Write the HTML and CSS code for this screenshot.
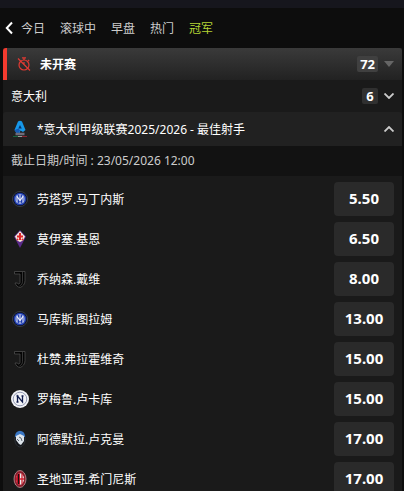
FILE: index.html
```html
<!DOCTYPE html>
<html lang="zh-CN">
<head>
<meta charset="UTF-8">
<meta name="viewport" content="width=device-width, initial-scale=1">
<title>冠军</title>
<link rel="stylesheet" href="styles.css">
</head>
<body>
<svg class="sprite" aria-hidden="true">
  <symbol id="inter" viewBox="0 0 18 18">
    <circle cx="9" cy="9" r="7.600" fill="#10131c" stroke="#3c414c" stroke-width=".8"/>
    <circle cx="9" cy="9" r="6.300" fill="#1d3bb0"/>
    <circle cx="9" cy="9" r="4.600" fill="none" stroke="#8fa0dc" stroke-width=".7"/>
    <path d="M6 5.500v7M9 4.500v9M12 5.500v7M6 6l3 5 3-5" fill="none" stroke="#e6ebfa" stroke-width="1.100"/>
  </symbol>
  <symbol id="fiorentina" viewBox="0 0 18 18">
    <path d="M9 0l6 6.500L9 18 3 6.500z" fill="#5a2a8a"/>
    <path d="M9 1l5 5.500-2 4L9 12l-3-1.500-2-4z" fill="#f3e9dc"/>
    <path d="M9 3v7M6 6.500h6M7 9l-1 1M11 9l1 1" stroke="#e0252b" stroke-width="2"/>
  </symbol>
  <symbol id="juve" viewBox="0 0 18 18">
    <path d="M3.500 1.500h10.500v9c0 3.500-2 6-5 7-2.500-.5-4-2-5-4.500h2.500c.7 1.600 2 1.500 2.500-.5V4H3.500z" fill="#050505" stroke="#4c4c4c" stroke-width=".8"/>
    <path d="M11.500 2v9.500c0 2-1 3.500-3 4.500" fill="none" stroke="#4c4c4c" stroke-width=".7"/>
  </symbol>
  <symbol id="napoli" viewBox="0 0 18 18">
    <circle cx="9" cy="9" r="9" fill="#f2f3f7"/>
    <circle cx="9" cy="9" r="6.800" fill="none" stroke="#7a82a0" stroke-width=".8"/>
    <path d="M5.500 6h2M10.500 6h2M5.500 12h2M6.500 12V6l5 6V6" fill="none" stroke="#111d4d" stroke-width="1.300"/>
  </symbol>
  <symbol id="atalanta" viewBox="0 0 18 18">
    <ellipse cx="9" cy="9" rx="5.200" ry="8" fill="#15171b" stroke="#3b4048" stroke-width=".6"/>
    <path d="M4 7c0-4 2-6 5-6s5 2 5 6z" fill="#3976c4"/>
    <path d="M5 6l4-2 4 2v5l-3 4-2-1-3-4z" fill="#dce3ea"/>
    <path d="M8 7l2 1 1 3M6 9l2 2" fill="none" stroke="#5d6670"/>
  </symbol>
  <symbol id="milan" viewBox="0 0 18 18">
    <ellipse cx="9" cy="9" rx="6" ry="8.500" fill="#8c1f2d" stroke="#c9a5a8" stroke-width=".7"/>
    <ellipse cx="9" cy="9" rx="4" ry="5.800" fill="#eee"/>
    <path d="M9 3.200c-3 0-4 3-4 5.800s1 5.800 4 5.800z" fill="#c9162b"/>
    <path d="M7.500 4v10" stroke="#111" stroke-width="1.200"/>
    <path d="M9 9h4" stroke="#d3202f" stroke-width="1.500"/>
    <path d="M11 4v10" stroke="#d3202f" stroke-width="1.300"/>
  </symbol>
</svg>

<div class="top-strip"></div>
<nav class="tabs">
  <button class="back" type="button" aria-label="返回">
    <svg width="8" height="14" viewBox="0 0 8 14"><path d="M7 1.500L1.800 7 7 12.500" fill="none" stroke="#fff" stroke-width="2"/></svg>
  </button>
  <a href="#">今日</a>
  <a href="#">滚球中</a>
  <a href="#">早盘</a>
  <a href="#">热门</a>
  <a href="#" class="active">冠军</a>
</nav>

<main class="panel">
  <div class="status">
    <svg class="timer" width="14" height="14" viewBox="0 0 14 14">
      <g fill="none" stroke="#e03a33" stroke-width="1.200">
        <circle cx="7" cy="8" r="5"/>
        <path d="M5 .8h4M7 1v2M1 1.500l12 12M11 3l1.200 1.200M7 5v3"/>
      </g>
    </svg>
    <h1>未开赛</h1>
    <span class="count">72</span>
    <svg class="arrow" width="10" height="6" viewBox="0 0 10 6"><path d="M0 0h10L5 6z" fill="#666"/></svg>
  </div>

  <div class="country">
    <span class="name">意大利</span>
    <span class="count">6</span>
    <svg class="arrow" width="10" height="6" viewBox="0 0 10 6"><path d="M.5.5L5 5 9.500.5" fill="none" stroke="#ccc" stroke-width="1.800"/></svg>
  </div>

  <div class="league">
    <svg class="logo" width="18" height="18" viewBox="0 0 18 18">
      <path d="M7 1.500Q9 0 11 1.500L14.500 10 12 12 9.500 10.500 8.500 13H5.500L3.500 10z" fill="#1698ea"/>
      <path d="M9 5l1.800 3.500H7.300z" fill="#0b3268"/>
      <path d="M3.500 10l4-1.500 1.500 2-1 2.500H5.500z" fill="#1559b5"/>
      <path d="M4.500 14h9" stroke="#6d6c7c" stroke-width="2.500"/>
      <path d="M2 16.500h5" stroke="#17643e"/><path d="M7 16.500h4" stroke="#999"/><path d="M11 16.500h5" stroke="#8c2631"/>
    </svg>
    <span class="name">*意大利甲级联赛2025/2026 - 最佳射手</span>
    <svg class="arrow" width="10" height="6" viewBox="0 0 10 6"><path d="M.5 5.500L5 1l4.500 4.500" fill="none" stroke="#ccc" stroke-width="1.800"/></svg>
  </div>

  <div class="deadline">截止日期/时间 : 23/05/2026 12:00</div>

  <ul class="players">
    <li><svg class="logo"><use href="#inter"/></svg><span class="name">劳塔罗.马丁内斯</span><button class="odds" type="button">5.50</button></li>
    <li><svg class="logo"><use href="#fiorentina"/></svg><span class="name">莫伊塞.基恩</span><button class="odds" type="button">6.50</button></li>
    <li><svg class="logo"><use href="#juve"/></svg><span class="name">乔纳森.戴维</span><button class="odds" type="button">8.00</button></li>
    <li><svg class="logo"><use href="#inter"/></svg><span class="name">马库斯.图拉姆</span><button class="odds" type="button">13.00</button></li>
    <li><svg class="logo"><use href="#juve"/></svg><span class="name">杜赞.弗拉霍维奇</span><button class="odds" type="button">15.00</button></li>
    <li><svg class="logo"><use href="#napoli"/></svg><span class="name">罗梅鲁.卢卡库</span><button class="odds" type="button">15.00</button></li>
    <li><svg class="logo"><use href="#atalanta"/></svg><span class="name">阿德默拉.卢克曼</span><button class="odds" type="button">17.00</button></li>
    <li><svg class="logo"><use href="#milan"/></svg><span class="name">圣地亚哥.希门尼斯</span><button class="odds" type="button">17.00</button></li>
  </ul>
</main>
</body>
</html>
```

FILE: styles.css
```css
* {
  margin: 0; padding: 0; box-sizing: border-box;
}
html {
  scrollbar-width: none;
}
body {
  background: #0d0d0d;
  color: #fff;
  font-family: "Noto Sans", "Noto Sans CJK SC", sans-serif;
  font-size: 12px;
  line-height: 18px;
}
button {
  border: none;
  font-family: inherit;
  color: #fff;
  cursor: pointer;
}
.sprite {
  position: absolute;
  width: 0; height: 0;
}
.top-strip {
  height: 8px;
  background: #16161d;
}
/* tabs */
.tabs {
  display: flex;
  align-items: center;
  gap: 15px;
  height: 40px;
  padding-left: 5px;
}
.back {
  display: flex;
  background: none;
  margin-right: -7px;
}
.tabs a {
  padding-top: 2px;
  color: #ccc;
  text-decoration: none;
}
.tabs .active {
  color: #b4d334;
}
/* panel */
.panel {
  margin: 0 2px 0 3px;
  background: #1a1a1a;
}
.status, .country, .league {
  display: flex;
  align-items: center;
  height: 32px;
  padding: 0 8px;
}
.status {
  border-left: 4px solid #f43b2f;
  border-radius: 3px 3px 0 0;
  background: linear-gradient(#3a3a3a, #222);
  padding-left: 10px;
}
.status h1 {
  flex: 1;
  margin-left: 9px;
  padding-top: 2px;
  font-size: 12px;
  font-weight: bold;
}
.name {
  flex: 1;
  padding-top: 2px;
}
.count {
  min-width: 16px;
  padding: 0 3px;
  border-radius: 2px;
  background: #404040;
  font-size: 13px;
  font-weight: bold;
  line-height: 16px;
  text-align: center;
}
.country .count {
  background: #303030;
}
.arrow {
  margin-left: 6px;
}
.league {
  height: 34px;
  border-radius: 3px 3px 0 0;
  background: #212121;
}
.logo {
  width: 18px;
  height: 18px;
  margin-right: 8px;
}
.deadline {
  padding: 6px 8px;
  background: #121212;
  color: #ccc;
}
/* players */
.players {
  padding: 3px 8px;
  list-style: none;
}
.players li {
  display: flex;
  align-items: center;
  height: 40px;
}
.odds {
  width: 60px;
  height: 34px;
  padding-bottom: 2px;
  border-radius: 4px;
  background: #2a2a2a;
  font-size: 15px;
  font-weight: bold;
}
```
